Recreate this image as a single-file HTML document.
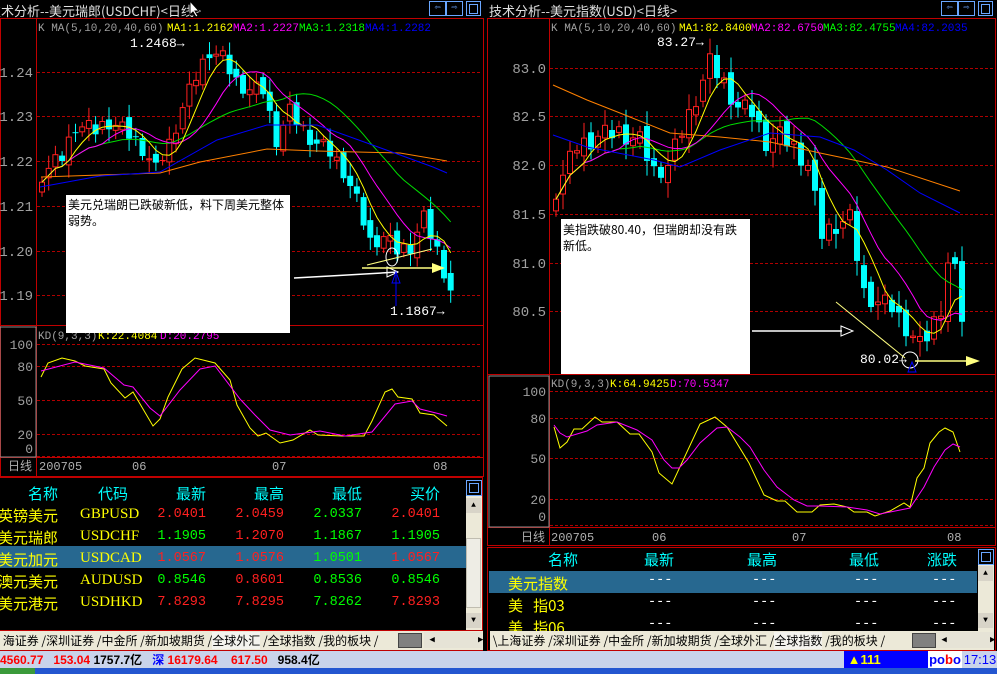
<!DOCTYPE html>
<html><head><meta charset="utf-8">
<style>
body{margin:0;width:997px;height:674px;overflow:hidden;background:#000;position:relative;font-family:"Liberation Mono","WenQuanYi Zen Hei",monospace}
.a{position:absolute;white-space:nowrap}
.cjk{font-family:"WenQuanYi Zen Hei","Noto Sans CJK SC",sans-serif}
</style></head><body>
<svg id="s" width="997" height="674" style="position:absolute;left:0;top:0" font-family="Liberation Mono, WenQuanYi Zen Hei, monospace">
<rect width="997" height="674" fill="#000"/>
<rect x="0.5" y="18.5" width="483" height="458" fill="none" stroke="#c00000"/>
<line x1="0" y1="325.5" x2="484" y2="325.5" stroke="#c00000"/>
<line x1="0" y1="457.5" x2="484" y2="457.5" stroke="#c00000"/>
<line x1="36.5" y1="19" x2="36.5" y2="476" stroke="#c00000"/>
<rect x="0" y="327" width="36" height="130" fill="none" stroke="#909090"/>
<g stroke="#b00000" stroke-dasharray="3,2">
<line x1="37" y1="72.5" x2="482" y2="72.5"/><line x1="37" y1="116.5" x2="482" y2="116.5"/><line x1="37" y1="161.5" x2="482" y2="161.5"/><line x1="37" y1="206.5" x2="482" y2="206.5"/><line x1="37" y1="251.5" x2="482" y2="251.5"/><line x1="37" y1="295.5" x2="482" y2="295.5"/>
<line x1="37" y1="344.5" x2="482" y2="344.5"/><line x1="37" y1="366.5" x2="482" y2="366.5"/><line x1="37" y1="400.5" x2="482" y2="400.5"/><line x1="37" y1="434.5" x2="482" y2="434.5"/><line x1="37" y1="456.5" x2="482" y2="456.5"/>
</g>
<g fill="#a0a0a0" font-size="14" text-anchor="end">
<text x="33" y="77">1.24</text><text x="33" y="121">1.23</text><text x="33" y="166">1.22</text><text x="33" y="211">1.21</text><text x="33" y="256">1.20</text><text x="33" y="300">1.19</text>
<text x="33" y="349" font-size="13">100</text><text x="33" y="371" font-size="13">80</text><text x="33" y="405" font-size="13">50</text><text x="33" y="439" font-size="13">20</text><text x="33" y="453" font-size="13">0</text>
</g>
<g fill="#b0b0b0" font-size="12"><text x="8" y="470" class="cjk">日线</text><text x="39" y="470">200705</text><text x="132" y="470">06</text><text x="272" y="470">07</text><text x="433" y="470">08</text></g>
<text x="38" y="31" font-size="11" fill="#a0a0a0">K  MA(5,10,20,40,60)</text>
<text x="167" y="31" font-size="11" fill="#ffff00">MA1:1.2162</text>
<text x="233" y="31" font-size="11" fill="#ff00ff">MA2:1.2227</text>
<text x="299" y="31" font-size="11" fill="#00ff00">MA3:1.2318</text>
<text x="365" y="31" font-size="11" fill="#0000ff">MA4:1.2282</text>
<g id="Lc"></g>
<polyline fill="none" stroke="#ff8000" points="41,177 100,175 160,173 200,162 267,149 317,151 400,153 447,161"/>
<polyline fill="none" stroke="#0000ff" points="40,187 100,176 160,172 217,140 267,125 317,125 367,143 433,167 447,173"/>
<text x="38" y="339" font-size="11" fill="#a0a0a0">KD(9,3,3)</text>
<text x="98" y="339" font-size="11" fill="#ffff00">K:22.4084</text><text x="160" y="339" font-size="11" fill="#ff00ff">D:20.2795</text>
<polyline fill="none" stroke="#ffff00" points="41,377 48,363 62,358 75,361 85,366 104,369 111,383 125,398 133,392 153,426 160,419 168,397 182,369 195,358 215,363 230,380 237,405 250,428 258,436 266,433 280,443 293,440 310,430 318,435 342,436 364,436 372,421 385,392 392,389 398,397 412,399 420,413 434,415 447,426"/>
<polyline fill="none" stroke="#ff00ff" points="41,371 75,362 104,368 124,385 133,387 150,408 160,416 180,390 200,369 215,366 240,399 255,415 270,430 290,435 320,431 345,436 372,432 395,404 412,401 420,409 440,414 447,416"/>
<rect x="66" y="195" width="224" height="138" fill="#fff"/>
<text x="68" y="209" font-size="12" fill="#000" class="cjk">美元兑瑞朗已跌破新低，料下周美元整体</text>
<text x="68" y="225" font-size="12" fill="#000" class="cjk">弱势。</text>
<text x="130" y="47" font-size="13" fill="#fff">1.2468→</text>
<text x="390" y="315" font-size="13" fill="#fff">1.1867→</text>
<polyline fill="none" stroke="#fff" stroke-width="1.5" points="294,278 330,276 398,272"/>
<polygon points="387,267 398,272 387,277" fill="none" stroke="#fff"/>
<ellipse cx="392" cy="257" rx="6" ry="9" fill="none" stroke="#fff"/>
<line x1="362" y1="268" x2="435" y2="268" stroke="#ffff80" stroke-width="1.5"/>
<polygon points="432,263 445,268 432,273" fill="#ffff80"/>
<line x1="367" y1="265" x2="432" y2="249" stroke="#ffff80"/>
<line x1="396" y1="306" x2="396" y2="275" stroke="#0000ff"/><polygon points="392,283 396,272 400,283" fill="none" stroke="#0000ff"/>

<rect x="487.5" y="18.5" width="508" height="527" fill="none" stroke="#c00000"/>
<line x1="488" y1="374.5" x2="996" y2="374.5" stroke="#c00000"/>
<line x1="488" y1="527.5" x2="996" y2="527.5" stroke="#c00000"/>
<line x1="549.5" y1="19" x2="549.5" y2="545" stroke="#c00000"/>
<rect x="489" y="376" width="60" height="151" fill="none" stroke="#909090"/>
<g stroke="#b00000" stroke-dasharray="3,2">
<line x1="550" y1="68.5" x2="994" y2="68.5"/><line x1="550" y1="116.5" x2="994" y2="116.5"/><line x1="550" y1="165.5" x2="994" y2="165.5"/><line x1="550" y1="214.5" x2="994" y2="214.5"/><line x1="550" y1="263.5" x2="994" y2="263.5"/><line x1="550" y1="311.5" x2="994" y2="311.5"/>
<line x1="550" y1="391.5" x2="994" y2="391.5"/><line x1="550" y1="418.5" x2="994" y2="418.5"/><line x1="550" y1="458.5" x2="994" y2="458.5"/><line x1="550" y1="499.5" x2="994" y2="499.5"/><line x1="550" y1="525.5" x2="994" y2="525.5"/>
</g>
<g fill="#a0a0a0" font-size="14" text-anchor="end">
<text x="546" y="73">83.0</text><text x="546" y="121">82.5</text><text x="546" y="170">82.0</text><text x="546" y="219">81.5</text><text x="546" y="268">81.0</text><text x="546" y="316">80.5</text>
<text x="546" y="396" font-size="13">100</text><text x="546" y="423" font-size="13">80</text><text x="546" y="463" font-size="13">50</text><text x="546" y="504" font-size="13">20</text><text x="546" y="521" font-size="13">0</text>
</g>
<g fill="#b0b0b0" font-size="12"><text x="521" y="541" class="cjk">日线</text><text x="551" y="541">200705</text><text x="652" y="541">06</text><text x="792" y="541">07</text><text x="947" y="541">08</text></g>
<text x="551" y="31" font-size="11" fill="#a0a0a0">K  MA(5,10,20,40,60)</text>
<text x="679" y="31" font-size="11" fill="#ffff00">MA1:82.8400</text>
<text x="751" y="31" font-size="11" fill="#ff00ff">MA2:82.6750</text>
<text x="823" y="31" font-size="11" fill="#00ff00">MA3:82.4755</text>
<text x="895" y="31" font-size="11" fill="#0000ff">MA4:82.2035</text>
<g id="Rc"></g>
<polyline fill="none" stroke="#ff8000" points="553,85 587,100 620,113 670,133 720,137 770,142 820,153 887,167 960,191"/>
<polyline fill="none" stroke="#0000ff" points="553,135 587,147 654,160 680,167 720,150 770,133 820,137 854,150 887,170 920,193 960,213"/>
<text x="551" y="387" font-size="11" fill="#a0a0a0">KD(9,3,3)</text>
<text x="610" y="387" font-size="11" fill="#ffff00">K:64.9425</text><text x="670" y="387" font-size="11" fill="#ff00ff">D:70.5347</text>
<polyline fill="none" stroke="#ffff00" points="554,427 560,448 567,442 574,429 582,429 595,417 602,422 617,422 630,434 639,434 652,452 659,473 672,484 700,424 715,417 727,427 749,463 764,495 777,501 785,501 797,512 812,512 820,505 834,504 847,507 854,512 867,512 875,516 890,511 904,503 910,507 917,478 924,468 930,443 939,432 945,428 953,432 960,452"/>
<polyline fill="none" stroke="#ff00ff" points="554,425 560,433 567,437 587,431 597,425 617,422 637,430 652,440 664,460 672,468 679,468 687,460 700,443 717,428 727,427 740,437 750,447 764,470 777,487 794,500 807,506 820,506 847,507 867,510 880,514 910,508 924,487 934,467 945,450 953,444 960,447"/>
<rect x="561" y="219" width="189" height="155" fill="#fff"/>
<text x="563" y="234" font-size="12" fill="#000" class="cjk">美指跌破80.40，但瑞朗却没有跌</text>
<text x="563" y="250" font-size="12" fill="#000" class="cjk">新低。</text>
<text x="657" y="46" font-size="13" fill="#fff">83.27→</text>
<text x="860" y="363" font-size="13" fill="#fff">80.02→</text>
<line x1="752" y1="331" x2="842" y2="331" stroke="#fff" stroke-width="1.5"/>
<polygon points="841,326 853,331 841,336" fill="none" stroke="#fff"/>
<ellipse cx="910" cy="360" rx="8" ry="8" fill="none" stroke="#fff"/>
<line x1="915" y1="361" x2="968" y2="361" stroke="#ffff80" stroke-width="1.5"/>
<polygon points="966,356 980,361 966,366" fill="#ffff80"/>
<line x1="836" y1="302" x2="905" y2="358" stroke="#ffff80"/>
<polygon points="908,372 912,362 916,372" fill="none" stroke="#0000ff"/>
</svg>

<div class="a cjk" style="left:-12px;top:1px;font-size:13px;color:#e0e0e0">技术分析--美元瑞郎(USDCHF)&lt;日线&gt;</div>
<div class="a cjk" style="left:489px;top:1px;font-size:13px;color:#e0e0e0">技术分析--美元指数(USD)&lt;日线&gt;</div>
<svg class="a" style="left:188px;top:0" width="14" height="18"><polygon points="2,1 2,15 5,12 8,17 10,16 7,11 11,11" fill="#fff" stroke="#000"/></svg>
<div class="a" style="left:429px;top:1px;width:15px;height:13px;border:1px solid #6aa6ff;color:#6aa6ff;font-size:10px;line-height:13px;text-align:center">⇦</div>
<div class="a" style="left:446px;top:1px;width:15px;height:13px;border:1px solid #6aa6ff;color:#6aa6ff;font-size:10px;line-height:13px;text-align:center">⇨</div>
<div class="a" style="left:466px;top:1px;width:13px;height:13px;border:1px solid #6aa6ff"><div style="margin:2px;height:8px;border:1px solid #6aa6ff"></div></div>
<div class="a" style="left:941px;top:1px;width:15px;height:13px;border:1px solid #6aa6ff;color:#6aa6ff;font-size:10px;line-height:13px;text-align:center">⇦</div>
<div class="a" style="left:958px;top:1px;width:15px;height:13px;border:1px solid #6aa6ff;color:#6aa6ff;font-size:10px;line-height:13px;text-align:center">⇨</div>
<div class="a" style="left:978px;top:1px;width:13px;height:13px;border:1px solid #6aa6ff"><div style="margin:2px;height:8px;border:1px solid #6aa6ff"></div></div>

<div class="a" style="left:0;top:477px;width:483px;height:154px;border:1px solid #c00000;border-left:none;box-sizing:border-box"></div>
<div class="a" style="left:0;top:546px;width:466px;height:22px;background:#276890"></div>
<div id="lt"></div>
<div class="a" style="left:466px;top:480px;width:16px;height:150px;background:#ece9d8"></div>
<div class="a" style="left:466px;top:480px;width:14px;height:14px;border:1px solid #6aa6ff;background:#000"><div style="margin:2px;height:8px;border:1px solid #6aa6ff"></div></div>
<div class="a" style="left:466px;top:498px;width:15px;height:15px;background:#d8d4c8;font-size:8px;text-align:center;line-height:15px">▲</div>
<div class="a" style="left:466px;top:538px;width:15px;height:70px;background:#eeede5;border:1px solid #c0bdb0;box-sizing:border-box"></div>
<div class="a" style="left:466px;top:613px;width:15px;height:15px;background:#d8d4c8;font-size:8px;text-align:center;line-height:15px">▼</div>
<div class="a" style="left:487px;top:547px;width:509px;height:104px;border:1px solid #c00000;box-sizing:border-box"></div>
<div class="a" style="left:489px;top:571px;width:488px;height:22px;background:#276890"></div>
<div id="rt"></div>
<div class="a" style="left:978px;top:549px;width:16px;height:82px;background:#ece9d8"></div>
<div class="a" style="left:978px;top:549px;width:14px;height:14px;border:1px solid #6aa6ff;background:#000"><div style="margin:2px;height:8px;border:1px solid #6aa6ff"></div></div>
<div class="a" style="left:978px;top:566px;width:15px;height:15px;background:#d8d4c8;font-size:8px;text-align:center;line-height:15px">▲</div>
<div class="a" style="left:978px;top:613px;width:15px;height:15px;background:#d8d4c8;font-size:8px;text-align:center;line-height:15px">▼</div>
<div class="a cjk" style="left:0;top:631px;width:483px;height:19px;background:#ece9d8;font-size:12px;line-height:19px;color:#000;border-bottom:1px solid #c00000">&nbsp;海证券 /深圳证券 /中金所 /新加坡期货 /<span style="background:#f4f3ee">全球外汇</span> /全球指数 /我的板块 /</div>
<div class="a" style="left:398px;top:633px;width:22px;height:13px;background:#808080;border:1px solid #444"></div>
<div class="a" style="left:424px;top:632px;width:58px;height:16px;background:#e6e3d6;font-size:9px;line-height:16px">&nbsp;◀&nbsp;&nbsp;&nbsp;&nbsp;&nbsp;&nbsp;&nbsp;&nbsp;▶</div>
<div class="a cjk" style="left:490px;top:631px;width:504px;height:19px;background:#ece9d8;font-size:12px;line-height:19px;color:#000">&nbsp;\上海证券 /深圳证券 /中金所 /新加坡期货 /全球外汇 /<span style="background:#f4f3ee">全球指数</span> /我的板块 /</div>
<div class="a" style="left:912px;top:633px;width:22px;height:13px;background:#808080;border:1px solid #444"></div>
<div class="a" style="left:936px;top:632px;width:58px;height:16px;background:#e6e3d6;font-size:9px;line-height:16px">&nbsp;◀&nbsp;&nbsp;&nbsp;&nbsp;&nbsp;&nbsp;&nbsp;&nbsp;▶</div>
<div class="a" style="left:0;top:651px;width:997px;height:17px;background:#c9d3ea"></div>
<div class="a" style="left:0;top:651px;font:bold 12px 'Liberation Sans',sans-serif;line-height:17px;color:#000"><span style="color:#f00">4560.77</span>&nbsp;&nbsp;&nbsp;<span style="color:#f00">153.04</span> 1757.7<span class="cjk">亿</span>&nbsp;&nbsp;&nbsp;<span style="color:#00f" class="cjk">深</span> <span style="color:#f00">16179.64</span>&nbsp;&nbsp;&nbsp;&nbsp;<span style="color:#f00">617.50</span>&nbsp;&nbsp;&nbsp;958.4<span class="cjk">亿</span></div>
<div class="a" style="left:844px;top:651px;width:84px;height:17px;background:#0000ff;color:#ff0;font:bold 13px 'Liberation Sans',sans-serif;line-height:17px">&nbsp;▲111</div>
<div class="a" style="left:928px;top:651px;width:34px;height:17px;background:#fff;color:#00f;font:bold 13px 'Liberation Sans',sans-serif;line-height:17px;text-align:center">po<span style="color:#f00">b</span>o</div>
<div class="a" style="left:963px;top:651px;width:34px;height:17px;color:#00f;font:13px 'Liberation Sans',sans-serif;line-height:17px;text-align:center">17:13</div>
<div class="a" style="left:0;top:668px;width:997px;height:6px;background:#2456d0"></div>
<div class="a" style="left:0;top:668px;width:35px;height:6px;background:#3a9a3a"></div>

<script>
function lerp(k,n){var c=[];for(var i=0;i<n;i++){for(var j=0;j<k.length-1;j++)if(i>=k[j][0]&&i<=k[j+1][0])break;var a=k[j],b=k[Math.min(j+1,k.length-1)];var t=b[0]==a[0]?0:(i-a[0])/(b[0]-a[0]);c.push(a[1]+(b[1]-a[1])*t);}return c;}
function draw(id,k,n,x0,dx,ymap,jit,w){
var c=lerp(k,n),g='';
for(var i=0;i<n;i++){var cl=c[i]+((i*7)%5-2)*jit*0.4;c[i]=cl;}
for(var i=0;i<n;i++){var o=i?c[i-1]+((i*3)%4-1.5)*jit*0.3:c[0]-jit;var cl=c[i];var hi=Math.max(o,cl)+jit*(0.5+(i*5%3)*0.4),lo=Math.min(o,cl)-jit*(0.5+(i*11%3)*0.4);
var x=x0+i*dx,up=cl>=o,col=up?'#ff2020':'#00ffff';var yt=ymap(Math.max(o,cl)),yb=ymap(Math.min(o,cl));if(yb-yt<1)yb=yt+1;
g+='<line x1="'+(x+w/2)+'" y1="'+ymap(hi)+'" x2="'+(x+w/2)+'" y2="'+ymap(lo)+'" stroke="'+col+'"/>';
g+='<rect x="'+(x+0.5)+'" y="'+yt+'" width="'+(w-1)+'" height="'+(yb-yt)+'" fill="'+(up?'#000':col)+'" stroke="'+col+'"/>';}
function ma(p,col){var pts=[];for(var i=0;i<n;i++){var s=0,m=0;for(var j=Math.max(0,i-p+1);j<=i;j++){s+=c[j];m++;}pts.push((x0+i*dx+w/2)+','+ymap(s/m));}g+='<polyline fill="none" stroke="'+col+'" points="'+pts.join(' ')+'"/>';}
ma(20,'#00dd00');ma(10,'#ff00ff');ma(5,'#ffff00');
document.getElementById(id).innerHTML=g;}
draw('Lc',[[0,1.217],[3,1.221],[5,1.228],[8,1.227],[10,1.229],[13,1.226],[15,1.223],[17,1.218],[19,1.224],[21,1.232],[23,1.239],[25,1.245],[27,1.243],[29,1.238],[31,1.236],[33,1.236],[35,1.225],[37,1.231],[39,1.227],[41,1.224],[43,1.222],[45,1.218],[47,1.211],[49,1.202],[51,1.203],[53,1.200],[55,1.201],[57,1.207],[59,1.200],[61,1.191]],62,39,6.7,function(p){return (72+(1.24-p)*4450).toFixed(1)},0.0022,6);
draw('Rc',[[0,81.75],[3,82.2],[6,82.3],[9,82.35],[12,82.25],[14,81.95],[16,82.0],[18,82.35],[20,82.7],[22,83.05],[24,82.85],[26,82.6],[28,82.55],[30,82.25],[32,82.3],[34,82.2],[36,82.0],[38,81.3],[40,81.4],[42,81.45],[44,80.7],[46,80.6],[48,80.55],[50,80.35],[52,80.15],[53,80.25],[55,80.55],[56,81.0],[57,80.9],[58,80.45]],59,553,7.0,function(p){return (68+(83-p)*97.5).toFixed(1)},0.12,6);
function cell(x,y,t,col,w,f){return '<div class="a'+(f?'':' cjk')+'" style="left:'+x+'px;top:'+y+'px;font-size:'+(f?f:'15px')+';'+(f=='13.5px'?'font-family:Liberation Mono,monospace;':(f?'font-family:Liberation Serif,serif;':''))+'color:'+col+';'+(w?'width:'+w+'px;text-align:right':'')+'">'+t+'</div>';}
var L='',cy='#00ffff',ye='#ffff00',r='#ff2020',gr='#00ff00';
[[10,'名称'],[80,'代码'],[158,'最新'],[236,'最高'],[314,'最低'],[392,'买价']].forEach(function(h){L+=cell(h[0],483,h[1],cy,48);});
var d=[['英镑美元','GBPUSD',r,'2.0401',r,'2.0459',gr,'2.0337',r,'2.0401'],['美元瑞郎','USDCHF',gr,'1.1905',r,'1.2070',gr,'1.1867',gr,'1.1905'],['美元加元','USDCAD',r,'1.0567',r,'1.0576',gr,'1.0501',r,'1.0567'],['澳元美元','AUDUSD',gr,'0.8546',r,'0.8601',gr,'0.8536',gr,'0.8546'],['美元港元','USDHKD',r,'7.8293',r,'7.8295',gr,'7.8262',r,'7.8293']];
d.forEach(function(q,i){var y=505+i*22;L+=cell(-2,y,q[0],ye,60);L+=cell(80,y+1,q[1],ye,0,'15px');L+=cell(148,y+2,q[3],q[2],58,'13.5px');L+=cell(226,y+2,q[5],q[4],58,'13.5px');L+=cell(304,y+2,q[7],q[6],58,'13.5px');L+=cell(382,y+2,q[9],q[8],58,'13.5px');});
document.getElementById('lt').innerHTML=L;
var R='';
[[530,'名称'],[626,'最新'],[729,'最高'],[831,'最低'],[909,'涨跌']].forEach(function(h){R+=cell(h[0],549,h[1],cy,48);});
['美元指数','美&nbsp;&nbsp;&nbsp;指03','美&nbsp;&nbsp;&nbsp;指06'].forEach(function(q,i){var y=573+i*22;R+=cell(508,y,q,ye);[648,752,854,932].forEach(function(x){R+=cell(x,y,'---','#fff',0,'13.5px');});});
document.getElementById('rt').innerHTML=R;
</script>
</body></html>
